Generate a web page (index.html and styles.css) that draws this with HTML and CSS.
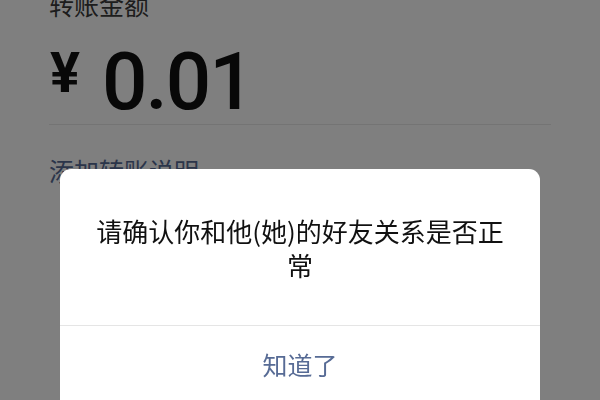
FILE: index.html
```html
<!DOCTYPE html>
<html lang="zh-CN">
<head>
<meta charset="utf-8">
<title>转账</title>
<link rel="stylesheet" href="styles.css">
</head>
<body>
<main class="page">
  <div class="label">转账金额</div>
  <div class="amount">
    <span class="currency">¥</span>
    <span class="value">0.01</span>
  </div>
  <div class="note">添加转账说明</div>
</main>
<div class="mask">
  <div class="dialog">
    <div class="dialog-body">请确认你和他(她)的好友关系是否正常</div>
    <div class="dialog-footer">
      <button class="dialog-btn" type="button">知道了</button>
    </div>
  </div>
</div>
</body>
</html>
```

FILE: styles.css
```css
* { box-sizing: border-box; }
html, body {
  margin: 0;
  padding: 0;
  width: 600px;
  height: 400px;
  overflow: hidden;
  background: #fff;
}
body {
  font-family: "Noto Sans CJK SC", "Noto Sans", sans-serif;
  color: #333;
}
.page {
  padding: 0 49px;
}
.label {
  margin-top: -8px;
  font-size: 25px;
  line-height: 25px;
  color: #3a3a3a;
}
.amount {
  display: flex;
  align-items: flex-start;
  margin-top: 25px;
  padding-bottom: 2px;
  border-bottom: 1px solid #e8e8e8;
  font-family: Roboto, "Liberation Sans", sans-serif;
  color: #111;
}
.currency {
  font-size: 56px;
  line-height: 56px;
  font-weight: 700;
  margin-top: 3px;
  margin-left: 1px;
  width: 52px;
}
.value {
  font-size: 80px;
  line-height: 80px;
  font-weight: 500;
  letter-spacing: -2px;
}
.note {
  margin-top: 33px;
  font-size: 25px;
  line-height: 25px;
  color: #576b95;
}
.mask {
  position: fixed;
  inset: 0;
  background: rgba(0, 0, 0, 0.5);
}
.dialog {
  position: absolute;
  left: 60px;
  top: 169px;
  width: 480px;
  background: #fff;
  border-radius: 11px;
  overflow: hidden;
}
.dialog-body {
  padding: 45px 28px 43px;
  font-size: 26px;
  line-height: 34px;
  color: #111;
  text-align: center;
}
.dialog-footer {
  border-top: 1px solid #e5e5e5;
  height: 120px;
}
.dialog-btn {
  display: block;
  width: 100%;
  border: 0;
  padding: 0;
  background: none;
  font-family: "Noto Sans CJK SC", sans-serif;
  font-size: 25px;
  line-height: 77px;
  color: #576b95;
  text-align: center;
}
```
